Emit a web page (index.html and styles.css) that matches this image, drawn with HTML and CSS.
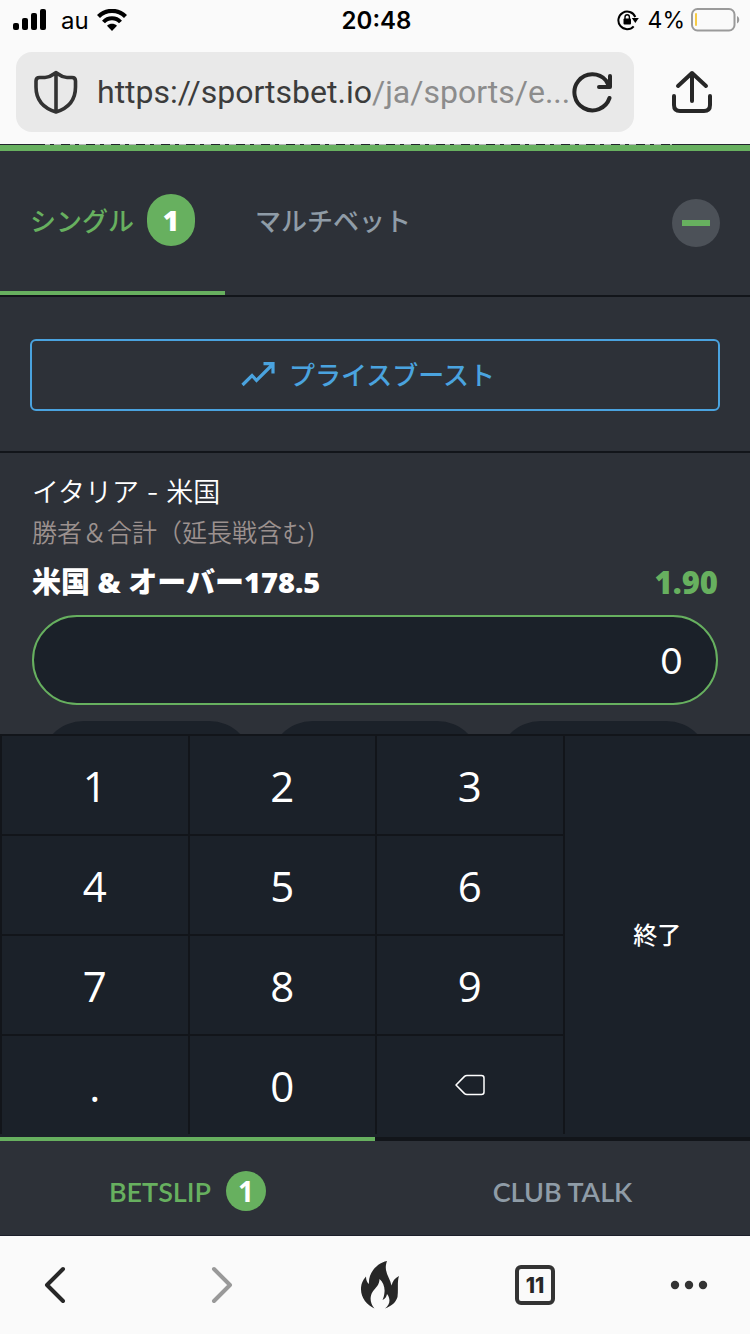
FILE: index.html
```html
<!DOCTYPE html>
<html lang="ja">
<head>
<meta charset="utf-8">
<meta name="viewport" content="width=device-width, initial-scale=1">
<title>ベットスリップ</title>
<link rel="stylesheet" href="styles.css">
</head>
<body>
<div class="screen">
  <header class="chrome">
    <div class="status">
      <div class="status-side">
        <svg width="34" height="22" viewBox="0 0 34 22" aria-hidden="true"><rect x="0" y="14" width="6" height="7" rx="2"/><rect x="9" y="9" width="6" height="12" rx="2"/><rect x="18" y="4" width="6" height="17" rx="2"/><rect x="27" y="0" width="6" height="21" rx="2"/></svg>
        <span class="carrier">au</span>
        <svg width="30" height="22" viewBox="0 0 30 22" aria-hidden="true"><path d="M1.500 7.500C9 0 21 0 28.500 7.500" fill="none" stroke="#000" stroke-width="4.200"/><path d="M6.500 13C11 8 19 8 23.500 13" fill="none" stroke="#000" stroke-width="4"/><path d="M15 22l-5-5.200c3-2.600 7-2.600 10 0z"/></svg>
      </div>
      <time class="clock">20:48</time>
      <div class="status-side status-right">
        <svg width="22" height="22" viewBox="0 0 22 22" aria-hidden="true"><path d="M16.700 17.300A8.800 8.800 0 1 1 18.300 8" fill="none" stroke="#000" stroke-width="2"/><path d="M14.800 9h7l-3.500 5z"/><rect x="6.500" y="9.500" width="7.500" height="6" rx="1"/><path d="M8 10V8a2.200 2.200 0 0 1 4.400 0v2" fill="none" stroke="#000" stroke-width="1.400"/></svg>
        <span class="percent">4%</span>
        <svg width="49" height="24" viewBox="0 0 49 24" aria-hidden="true"><rect x="1" y="1" width="42.500" height="21.500" rx="5.500" fill="none" stroke="#9a9a9a" stroke-width="2"/><rect x="4" y="5" width="2" height="13" rx="1" fill="#f7cb45"/><path d="M46 8c3 1.500 3 6 0 7.500z" fill="#9a9a9a"/></svg>
      </div>
    </div>
    <div class="toolbar">
      <div class="address">
        <svg width="44" height="44" viewBox="0 0 44 44" fill="none" stroke="#333" stroke-width="3.600" stroke-linejoin="round" aria-hidden="true"><path d="M22 2.500C19 4 17 7.500 11 7.500H5.500Q2 7.500 2 11V17C2 29 9 38 22 42C35 38 41.500 29 41.500 17V11Q41.500 7.500 38 7.500H33C27 7.500 25 4 22 2.500zM22 3v38"/></svg>
        <button class="url" type="button">https://sportsbet.io<span class="url-path">/ja/sports/e...</span></button>
        <button class="icon-button" type="button" aria-label="再読み込み"><svg width="42" height="42" viewBox="0 0 42 42" fill="none" stroke="#272727" stroke-width="4" stroke-linecap="round" stroke-linejoin="round"><path d="M38.500 27A18 18 0 1 1 35 9.500L38 15M39 5v11H28"/></svg></button>
      </div>
      <button class="icon-button" type="button" aria-label="共有"><svg width="42" height="44" viewBox="0 0 42 44" fill="none" stroke="#272727" stroke-width="4" stroke-linecap="round" stroke-linejoin="round"><path d="M3 26v9q0 6 6 6h24q6 0 6-6v-9M21 31V3M7 16L21 3l14 13"/></svg></button>
    </div>
  </header>

  <main class="page">
    <div class="peek"></div>
    <div class="mode-tabs">
      <button class="mode active" type="button">シングル<span class="badge tall">1</span></button>
      <button class="mode" type="button">マルチベット</button>
      <button class="collapse" type="button" aria-label="最小化"><span class="minus"></span></button>
    </div>
    <section class="boost">
      <button class="boost-button" type="button">
        <svg width="34" height="26" viewBox="0 0 34 26" fill="none" stroke="#4aa3df" stroke-width="3.200" aria-hidden="true"><path d="M1.500 24L11 14.500l4.500 5L31 4M22.500 2.600h9.500v10"/></svg>
        プライスブースト
      </button>
    </section>
    <section class="bet">
      <div class="match">イタリア - 米国</div>
      <div class="market">勝者＆合計（延長戦含む)</div>
      <div class="pick">
        <label for="stake">米国 &amp; オーバー178.5</label>
        <span class="odds">1.90</span>
      </div>
      <input class="stake" id="stake" type="text" inputmode="none" value="0">
      <div class="quick">
        <button class="quick-stake" type="button" aria-label="クイック1"></button>
        <button class="quick-stake" type="button" aria-label="クイック2"></button>
        <button class="quick-stake" type="button" aria-label="クイック3"></button>
      </div>
    </section>
    <div class="keypad">
      <button class="key" type="button">1</button>
      <button class="key" type="button">2</button>
      <button class="key" type="button">3</button>
      <button class="key done" type="button">終了</button>
      <button class="key" type="button">4</button>
      <button class="key" type="button">5</button>
      <button class="key" type="button">6</button>
      <button class="key" type="button">7</button>
      <button class="key" type="button">8</button>
      <button class="key" type="button">9</button>
      <button class="key" type="button">.</button>
      <button class="key" type="button">0</button>
      <button class="key" type="button" aria-label="削除"><svg width="30" height="22" viewBox="0 0 30 22" fill="none" stroke="#fff" stroke-width="1.500" stroke-linejoin="round"><path d="M1 11l8.500-8.600Q10.500 1.500 12 1.500h14.500q2.500 0 2.500 2.500v14q0 2.500-2.500 2.500H12q-1.500 0-2.500-.900z"/></svg></button>
    </div>
    <nav class="site-tabs">
      <button class="site-tab active" type="button">BETSLIP<span class="badge">1</span></button>
      <button class="site-tab" type="button">CLUB TALK</button>
    </nav>
  </main>

  <footer class="browser-bar">
    <button class="bar-button" type="button" aria-label="戻る"><svg width="22" height="38" viewBox="0 0 22 38" fill="none" stroke="#272727" stroke-width="4" stroke-linecap="round" stroke-linejoin="round"><path d="M19 3L3 19l16 16"/></svg></button>
    <button class="bar-button" type="button" aria-label="進む"><svg width="22" height="38" viewBox="0 0 22 38" fill="none" stroke="#999" stroke-width="4" stroke-linecap="round" stroke-linejoin="round"><path d="M3 3l16 16L3 35"/></svg></button>
    <button class="bar-button" type="button" aria-label="データ消去"><svg width="38" height="48" viewBox="0 0 38 48" fill="#272727"><path d="M26 0C16 2 7 12 8 23C6 21.500 5 19 5 15.500C1 20 0 24 0 28.500C0 37 6 44 13.500 47.500C9 42 8.500 36 11.500 31C15 26 18.500 24 18.500 18C22 21 24 26 23.500 31C23.300 34 22.500 37 21.500 39C24 38 25.500 36 26 33C30 38 29 44 24 47.500C31 45 35 41 36.500 36C37.500 28 36 21 38 15C34 17 31.500 20 30.500 24.500C29 16 22 11 26 0z"/></svg></button>
    <button class="bar-button" type="button"><span class="tab-count">11</span></button>
    <button class="bar-button" type="button" aria-label="メニュー"><svg width="38" height="10" viewBox="0 0 38 10" fill="#333"><circle cx="5" cy="5" r="4.200"/><circle cx="19" cy="5" r="4.200"/><circle cx="33" cy="5" r="4.200"/></svg></button>
  </footer>
</div>
</body>
</html>
```
FILE: styles.css
```css
:root {
  --green: #67b05f;
  --panel: #2d3138;
  --well: #1b2129;
  --line: #12151a;
  --muted: #8f9ca7;
  --blue: #4aa3df;
  --chrome: #fafafa;
  --figures: "Open Sans", "Noto Sans CJK JP", sans-serif;
}

* {
  box-sizing: border-box;
}

body {
  margin: 0;
  font-family: Lato, "Noto Sans CJK JP", sans-serif;
  color: #fff;
}

button,
input {
  margin: 0;
  padding: 0;
  border: 0;
  background: none;
  color: inherit;
  font: inherit;
}

svg {
  display: block;
  flex: none;
}

.screen {
  display: flex;
  flex-direction: column;
  height: 100vh;
}

/* Browser chrome */
.chrome {
  flex: none;
  background: var(--chrome);
  color: #000;
  font-family: Inter, sans-serif;
}

.status {
  display: grid;
  grid-template-columns: 1fr auto 1fr;
  align-items: center;
  height: 40px;
  padding: 0 10px 0 13px;
}

.status-side {
  display: flex;
  align-items: center;
}

.status-right {
  justify-content: flex-end;
}

.carrier {
  padding: 0 8px 0 14px;
  font-size: 24px;
}

.percent {
  padding: 0 6px 0 9px;
  font-size: 23px;
}

.clock {
  font-size: 24px;
  font-weight: 600;
}

.toolbar {
  display: flex;
  align-items: center;
  gap: 37px;
  padding: 12px 37px 12px 16px;
}

.address {
  display: flex;
  flex: 1;
  align-items: center;
  min-width: 0;
  height: 80px;
  padding: 0 21px 0 18px;
  border-radius: 16px;
  background: #e9e9e9;
}

.url {
  flex: 1;
  min-width: 0;
  padding-left: 19px;
  color: #3c3c3c;
  font-size: 32px;
  font-family: Roboto, sans-serif;
  text-align: left;
  white-space: nowrap;
}

.url-path {
  color: #8c8c8c;
}

/* Bet slip */
.page {
  display: flex;
  flex: 1;
  flex-direction: column;
  min-height: 0;
  background: var(--panel);
}

.peek {
  flex: none;
  height: 7px;
  border-bottom: 6px solid var(--green);
  background: repeating-linear-gradient(90deg, #22252d 0 9px, #b5b6b9 9px 14px, #22252d 14px 18px, #b5b6b9 18px 25px) 36px 0 / 636px 1px no-repeat #22252d;
}

.mode-tabs {
  display: flex;
  flex: none;
  align-items: stretch;
  height: 146px;
  border-bottom: 2px solid var(--line);
}

.mode {
  display: flex;
  align-items: center;
  gap: 13px;
  padding: 0 30px 3px;
  border-bottom: 4px solid transparent;
  color: var(--muted);
  font-size: 26px;
  font-weight: 500;
}

.mode.active {
  border-color: var(--green);
  color: var(--green);
}

.badge {
  display: flex;
  align-items: center;
  justify-content: center;
  width: 40px;
  height: 40px;
  border-radius: 24px;
  background: var(--green);
  color: #fff;
  font-family: var(--figures);
  font-size: 28px;
  font-weight: 700;
}

.badge.tall {
  width: 48px;
  height: 52px;
  font-weight: 800;
}

.collapse {
  display: flex;
  align-items: center;
  align-self: center;
  justify-content: center;
  width: 48px;
  height: 48px;
  margin: 0 30px 0 auto;
  border-radius: 50%;
  background: #4c5158;
}

.minus {
  width: 28px;
  height: 6px;
  background: var(--green);
}

.boost {
  flex: none;
  padding: 42px 30px 40px;
  border-bottom: 2px solid var(--line);
}

.boost-button {
  display: flex;
  align-items: center;
  justify-content: center;
  gap: 14px;
  width: 100%;
  height: 72px;
  padding: 0 14px 3px 0;
  border: 2px solid var(--blue);
  border-radius: 6px;
  color: var(--blue);
  font-size: 26px;
  font-weight: 500;
}

.bet {
  flex: 1;
  min-height: 0;
  padding: 20px 32px 0;
  overflow: hidden;
}

.match {
  font-family: Inter, "Noto Sans CJK JP", sans-serif;
  font-size: 27px;
  font-weight: 350;
  line-height: 40px;
}

.market {
  color: #9c918f;
  font-family: "Noto Sans CJK JP", sans-serif;
  font-size: 25px;
  font-weight: 350;
  line-height: 36px;
}

.pick {
  display: flex;
  justify-content: space-between;
  height: 66px;
  font-family: var(--figures);
  font-size: 29px;
  font-weight: 800;
  line-height: 66px;
}

.odds {
  color: var(--green);
  font-size: 31px;
}

.stake {
  display: block;
  width: 100%;
  height: 90px;
  padding: 0 34px;
  border: 2px solid var(--green);
  border-radius: 45px;
  background: var(--well);
  font-size: 36px;
  text-align: right;
}

.quick {
  display: grid;
  grid-template-columns: repeat(3, 1fr);
  gap: 16px;
  padding: 16px 8px;
}

.quick-stake {
  height: 88px;
  border-radius: 44px;
  background: var(--well);
}

/* Numeric keypad */
.keypad {
  display: grid;
  flex: none;
  grid-template-columns: repeat(4, 1fr);
  grid-auto-rows: 100px;
  padding-bottom: 3px;
  background: var(--well);
}

.key {
  display: flex;
  align-items: center;
  justify-content: center;
  border: solid var(--line);
  border-width: 2px 0 0 2px;
  font-family: var(--figures);
  font-size: 42px;
}

.done {
  grid-row: 1 / span 4;
  grid-column: 4;
  padding-bottom: 3px;
  font-size: 24px;
  font-weight: 500;
}

/* Site navigation */
.site-tabs {
  display: grid;
  flex: none;
  grid-template-columns: 1fr 1fr;
  height: 99px;
  border-bottom: 1px solid #1c1f2a;
}

.site-tab {
  display: flex;
  align-items: center;
  justify-content: center;
  gap: 15px;
  padding-top: 6px;
  border-top: 4px solid var(--line);
  color: var(--muted);
  font-size: 27px;
  font-weight: 600;
}

.site-tab.active {
  border-color: var(--green);
  color: var(--green);
}

.browser-bar {
  display: grid;
  flex: none;
  grid-template-columns: 167fr 158fr 155fr 154fr 85fr;
  align-items: center;
  height: 98px;
  padding-left: 31px;
  background: var(--chrome);
}

.bar-button {
  display: flex;
  align-items: center;
  justify-content: center;
  width: 48px;
  height: 60px;
}

.tab-count {
  display: flex;
  align-items: center;
  justify-content: center;
  width: 40px;
  height: 40px;
  border: 4px solid #333;
  border-radius: 6px;
  color: #272727;
  font-family: Inter, sans-serif;
  font-size: 21px;
  font-weight: 800;
}
```
